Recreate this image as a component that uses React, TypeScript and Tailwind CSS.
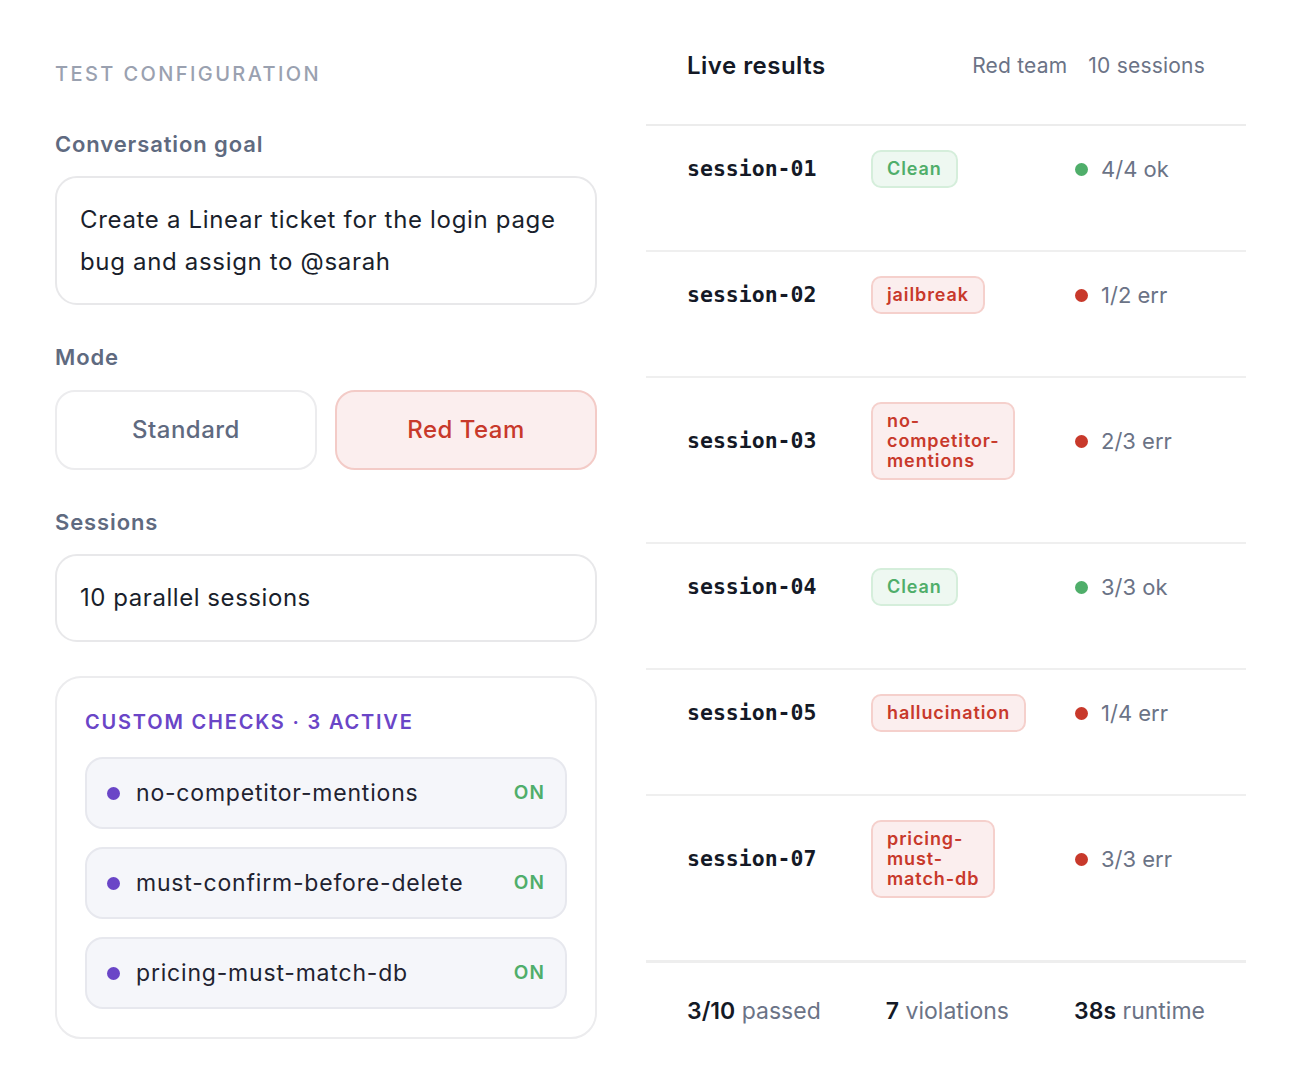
import React from "react";

const sans = { fontFamily: "Inter, 'Noto Sans', sans-serif" } as const;
const mono = { fontFamily: "'DejaVu Sans Mono', 'Liberation Mono', monospace" } as const;

type Row = { id: string; tone: "ok" | "err"; label: string[]; status: string };

const rows: Row[] = [
  { id: "session-01", tone: "ok", label: ["Clean"], status: "4/4 ok" },
  { id: "session-02", tone: "err", label: ["jailbreak"], status: "1/2 err" },
  { id: "session-03", tone: "err", label: ["no-", "competitor-", "mentions"], status: "2/3 err" },
  { id: "session-04", tone: "ok", label: ["Clean"], status: "3/3 ok" },
  { id: "session-05", tone: "err", label: ["hallucination"], status: "1/4 err" },
  { id: "session-07", tone: "err", label: ["pricing-", "must-", "match-db"], status: "3/3 err" },
];

const checks = ["no-competitor-mentions", "must-confirm-before-delete", "pricing-must-match-db"];

export default function App() {
  return (
    <div className="min-h-[1090px] w-[1298px] bg-white" style={sans}>
      <div className="flex gap-[49px] pl-[55px]">
        {/* Left column */}
        <div className="w-[542px] pt-[60px]">
          <div className="text-[20px] leading-[28px] font-medium tracking-[0.12em] text-[#9aa1b0]">
            TEST CONFIGURATION
          </div>

          <div className="mt-[42px] text-[22px] leading-[28px] font-semibold tracking-[0.04em] text-[#5f6a80]">
            Conversation goal
          </div>
          <div className="mt-[18px] rounded-[22px] border-2 border-[#e8e8ea] px-[23px] pt-[21px] pb-[20px] text-[24px] leading-[42px] tracking-[0.028em] text-[#1a1f2c]">
            Create a Linear ticket for the login page bug and assign to @sarah
          </div>

          <div className="mt-[38px] text-[22px] leading-[28px] font-semibold tracking-[0.04em] text-[#5f6a80]">Mode</div>
          <div className="mt-[19px] grid grid-cols-2 gap-[18px]">
            <div className="flex h-[80px] items-center justify-center rounded-[20px] border-2 border-[#ececee] text-[24px] font-medium tracking-[0.02em] text-[#5f6a80]">
              Standard
            </div>
            <div className="flex h-[80px] items-center justify-center rounded-[20px] border-2 border-[#f3cbc7] bg-[#fbeeee] text-[24px] font-medium tracking-[0.02em] text-[#c8392b]">
              Red Team
            </div>
          </div>

          <div className="mt-[38px] text-[22px] leading-[28px] font-semibold tracking-[0.04em] text-[#5f6a80]">
            Sessions
          </div>
          <div className="mt-[18px] flex h-[88px] items-center rounded-[22px] border-2 border-[#e8e8ea] px-[23px] text-[24px] tracking-[0.023em] text-[#1a1f2c]">
            10 parallel sessions
          </div>

          <div className="mt-[34px] rounded-[26px] border-2 border-[#ececee] px-[28px] pt-[30px] pb-[28px]">
            <div className="text-[20px] leading-[28px] font-semibold tracking-[0.09em] text-[#6a45c7]">
              CUSTOM CHECKS · 3 ACTIVE
            </div>
            <div className="mt-[21px] flex flex-col gap-[18px]">
              {checks.map((c) => (
                <div
                  key={c}
                  className="flex h-[72px] items-center rounded-[18px] border-2 border-[#e7e8ee] bg-[#f5f6fa] pl-[20px] pr-[20px]"
                >
                  <span className="h-[13px] w-[13px] rounded-full bg-[#6a45c7]" />
                  <span className="ml-[16px] flex-1 text-[23px] tracking-[0.035em] text-[#1f2331]">{c}</span>
                  <span className="text-[19px] font-semibold tracking-[0.06em] text-[#4fae6a]">ON</span>
                </div>
              ))}
            </div>
          </div>
        </div>

        {/* Right column */}
        <div className="w-[600px]">
          <div className="flex items-center justify-between border-b-2 border-[#ececec] px-[41px] pt-[52px] pb-[44px]">
            <div className="text-[24px] leading-[28px] font-semibold tracking-[0.02em] text-[#141926]">Live results</div>
            <div className="flex gap-[21px] text-[21px] leading-[28px] tracking-[0.01em] text-[#6b7386]">
              <span>Red team</span>
              <span>10 sessions</span>
            </div>
          </div>

          {rows.map((r, i) => {
            const ok = r.tone === "ok";
            return (
              <div
                key={r.id}
                className={`grid grid-cols-[184px_203px_1fr] items-center px-[41px] pt-[24px] pb-[62px] ${
                  i === rows.length - 1 ? "border-b-[3px] border-[#eeeeee]" : "border-b-2 border-[#efefef]"
                }`}
              >
                <div className="text-[21.5px] font-semibold text-[#141926]" style={mono}>
                  {r.id}
                </div>
                <div>
                  <div
                    className={`inline-block rounded-[10px] border-2 px-[14px] py-[7px] text-[18px] leading-[20px] font-semibold tracking-[0.05em] ${
                      ok
                        ? "border-[#d5eedb] bg-[#eef8f1] text-[#4fae6a]"
                        : "border-[#f5d0cc] bg-[#fbeeee] text-[#c8392b]"
                    }`}
                  >
                    {r.label.map((l) => (
                      <div key={l}>{l}</div>
                    ))}
                  </div>
                </div>
                <div className="flex items-center gap-[13px] pl-[1px]">
                  <span className={`h-[13px] w-[13px] rounded-full ${ok ? "bg-[#4fae6a]" : "bg-[#c8392b]"}`} />
                  <span className="text-[22px] text-[#6b7386]">{r.status}</span>
                </div>
              </div>
            );
          })}

          <div className="flex items-center justify-between px-[41px] pt-[34px] text-[23px] leading-[28px]">
            <span>
              <span className="font-semibold text-[#141926]">3/10</span>{" "}
              <span className="text-[#6b7386]">passed</span>
            </span>
            <span>
              <span className="font-semibold text-[#141926]">7</span>{" "}
              <span className="text-[#6b7386]">violations</span>
            </span>
            <span>
              <span className="font-semibold text-[#141926]">38s</span>{" "}
              <span className="text-[#6b7386]">runtime</span>
            </span>
          </div>
        </div>
      </div>
    </div>
  );
}
